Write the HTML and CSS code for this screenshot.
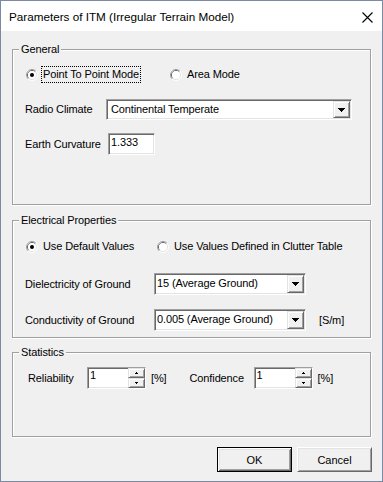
FILE: index.html
```html
<!DOCTYPE html>
<html>
<head>
<meta charset="utf-8">
<title>Parameters of ITM</title>
<link rel="stylesheet" href="styles.css">
</head>
<body>
<div class="window">
  <div class="titlebar">
    <span class="title">Parameters of ITM (Irregular Terrain Model)</span>
    <svg class="close" width="11" height="11" viewBox="0 0 11 11"><path d="M0.5 0.5L10.5 10.5M10.5 0.5L0.5 10.5" stroke="#000" stroke-width="1.1" fill="none"/></svg>
  </div>
  <div class="client">
    <fieldset class="group">
      <legend>General</legend>
      <div class="content c-general">
        <div class="row r-radio">
          <label class="radio w-p2p">
            <svg class="rb" width="12" height="12" viewBox="0 0 12 12"><path d="M2.11 9.89A5.5 5.5 0 0 1 9.89 2.11" stroke="#a0a0a0" fill="none"/><path d="M9.89 2.11A5.5 5.5 0 0 1 2.11 9.89" stroke="#fff" fill="none"/><path d="M2.82 9.18A4.5 4.5 0 0 1 9.18 2.82" stroke="#696969" fill="none"/><path d="M9.18 2.82A4.5 4.5 0 0 1 2.82 9.18" stroke="#e3e3e3" fill="none"/><circle cx="6" cy="6" r="4" fill="#fff"/><circle cx="6" cy="6" r="2" fill="#000"/></svg>
            <span class="rtext focus">Point To Point Mode</span>
          </label>
          <label class="radio">
            <svg class="rb" width="12" height="12" viewBox="0 0 12 12"><path d="M2.11 9.89A5.5 5.5 0 0 1 9.89 2.11" stroke="#a0a0a0" fill="none"/><path d="M9.89 2.11A5.5 5.5 0 0 1 2.11 9.89" stroke="#fff" fill="none"/><path d="M2.82 9.18A4.5 4.5 0 0 1 9.18 2.82" stroke="#696969" fill="none"/><path d="M9.18 2.82A4.5 4.5 0 0 1 2.82 9.18" stroke="#e3e3e3" fill="none"/><circle cx="6" cy="6" r="4" fill="#fff"/></svg>
            <span class="rtext">Area Mode</span>
          </label>
        </div>
        <div class="row r-climate">
          <span class="lbl w-climate">Radio Climate</span>
          <div class="combo combo-climate">
            <span class="ctext">Continental Temperate</span>
            <span class="dropbtn"><svg width="7" height="4" viewBox="0 0 7 4"><path d="M0 0h7v1h-1v1h-1v1h-1v1h-1v-1h-1v-1h-1v-1h-1z" fill="#000"/></svg></span>
          </div>
        </div>
        <div class="row r-earth">
          <span class="lbl w-earth">Earth Curvature</span>
          <div class="edit edit-earth">1.333</div>
        </div>
      </div>
    </fieldset>

    <fieldset class="group g-elec">
      <legend>Electrical Properties</legend>
      <div class="content c-elec">
        <div class="row r-radio">
          <label class="radio w-default">
            <svg class="rb" width="12" height="12" viewBox="0 0 12 12"><path d="M2.11 9.89A5.5 5.5 0 0 1 9.89 2.11" stroke="#a0a0a0" fill="none"/><path d="M9.89 2.11A5.5 5.5 0 0 1 2.11 9.89" stroke="#fff" fill="none"/><path d="M2.82 9.18A4.5 4.5 0 0 1 9.18 2.82" stroke="#696969" fill="none"/><path d="M9.18 2.82A4.5 4.5 0 0 1 2.82 9.18" stroke="#e3e3e3" fill="none"/><circle cx="6" cy="6" r="4" fill="#fff"/><circle cx="6" cy="6" r="2" fill="#000"/></svg>
            <span class="rtext">Use Default Values</span>
          </label>
          <label class="radio">
            <svg class="rb" width="12" height="12" viewBox="0 0 12 12"><path d="M2.11 9.89A5.5 5.5 0 0 1 9.89 2.11" stroke="#a0a0a0" fill="none"/><path d="M9.89 2.11A5.5 5.5 0 0 1 2.11 9.89" stroke="#fff" fill="none"/><path d="M2.82 9.18A4.5 4.5 0 0 1 9.18 2.82" stroke="#696969" fill="none"/><path d="M9.18 2.82A4.5 4.5 0 0 1 2.82 9.18" stroke="#e3e3e3" fill="none"/><circle cx="6" cy="6" r="4" fill="#fff"/></svg>
            <span class="rtext">Use Values Defined in Clutter Table</span>
          </label>
        </div>
        <div class="row r-diel">
          <span class="lbl w-ground">Dielectricity of Ground</span>
          <div class="combo combo-ground">
            <span class="ctext ctext-ground">15 (Average Ground)</span>
            <span class="dropbtn"><svg width="7" height="4" viewBox="0 0 7 4"><path d="M0 0h7v1h-1v1h-1v1h-1v1h-1v-1h-1v-1h-1v-1h-1z" fill="#000"/></svg></span>
          </div>
        </div>
        <div class="row r-cond">
          <span class="lbl w-ground">Conductivity of Ground</span>
          <div class="combo combo-ground">
            <span class="ctext ctext-ground">0.005 (Average Ground)</span>
            <span class="dropbtn"><svg width="7" height="4" viewBox="0 0 7 4"><path d="M0 0h7v1h-1v1h-1v1h-1v1h-1v-1h-1v-1h-1v-1h-1z" fill="#000"/></svg></span>
          </div>
          <span class="unit unit-sm">[S/m]</span>
        </div>
      </div>
    </fieldset>

    <fieldset class="group g-stats">
      <legend>Statistics</legend>
      <div class="content c-stats">
        <div class="row r-stats">
          <span class="lbl w-rel">Reliability</span>
          <div class="spin spin-rel">
            <span class="stext">1</span>
            <span class="spinbtns">
              <span class="sbtn"><svg width="3" height="2" viewBox="0 0 3 2"><path d="M1 0h1v1h1v1h-3v-1h1z" fill="#000"/></svg></span>
              <span class="sbtn"><svg width="3" height="2" viewBox="0 0 3 2"><path d="M0 0h3v1h-1v1h-1v-1h-1z" fill="#000"/></svg></span>
            </span>
          </div>
          <span class="unit unit-pct">[%]</span>
          <span class="lbl w-conf">Confidence</span>
          <div class="spin spin-conf">
            <span class="stext">1</span>
            <span class="spinbtns">
              <span class="sbtn"><svg width="3" height="2" viewBox="0 0 3 2"><path d="M1 0h1v1h1v1h-3v-1h1z" fill="#000"/></svg></span>
              <span class="sbtn"><svg width="3" height="2" viewBox="0 0 3 2"><path d="M0 0h3v1h-1v1h-1v-1h-1z" fill="#000"/></svg></span>
            </span>
          </div>
          <span class="unit unit-pct">[%]</span>
        </div>
      </div>
    </fieldset>

    <div class="footer">
      <button class="btn btn-default">OK</button>
      <button class="btn">Cancel</button>
    </div>
  </div>
</div>
</body>
</html>
```
FILE: styles.css
```css
html, body {
  margin: 0;
  padding: 0;
  background: #f0f0f0;
}

body {
  font-family: "Liberation Sans", Arial, sans-serif;
  color: #000;
}

.window {
  width: 383px;
  height: 482px;
  box-sizing: border-box;
  border: 1px solid #7b8aa0;
  background: #f0f0f0;
  display: flex;
  flex-direction: column;
}

.titlebar {
  flex: none;
  height: 30px;
  background: #fff;
  display: flex;
  align-items: center;
  justify-content: space-between;
  padding: 0 9px 0 8px;
}

.title {
  font-size: 11.7px;
  line-height: 16px;
  padding-top: 1px;
}

.close {
  display: block;
  margin-top: 2px;
}

.client {
  flex: 1;
  padding: 12px 11px 0 11px;
  display: flex;
  flex-direction: column;
  font-size: 11px;
  line-height: 13px;
  letter-spacing: -0.12px;
}

.group {
  margin: 0;
  padding: 0;
  min-width: 0;
  border: 1px solid #a0a0a0;
  box-shadow: 1px 1px 0 #fff, inset 1px 1px 0 #fff;
}

.group legend {
  margin-left: 6px;
  padding: 0 2px;
  font-size: 11px;
  line-height: 13px;
  background: #f0f0f0;
}

.g-elec {
  margin-top: 9px;
}

.g-stats {
  margin-top: 8px;
}

.content {
  box-sizing: border-box;
  display: flex;
  flex-direction: column;
}

.c-general {
  height: 148px;
  padding-top: 11px;
}

.c-elec {
  height: 110px;
  padding-top: 12px;
}

.c-stats {
  height: 77px;
  padding-top: 8px;
}

.row {
  display: flex;
  align-items: center;
  padding-left: 12px;
}

.r-radio {
  height: 15px;
  padding-left: 13px;
}

.r-climate {
  margin-top: 17px;
  height: 21px;
}

.r-earth {
  margin-top: 13px;
  height: 22px;
}

.r-diel {
  margin-top: 19px;
  height: 22px;
}

.r-cond {
  margin-top: 14px;
  height: 22px;
}

.r-stats {
  height: 22px;
  padding-left: 15px;
}

.radio {
  display: flex;
  align-items: center;
}

.rb {
  display: block;
  flex: none;
}

.rtext {
  margin-left: 4px;
  padding: 1px 1px;
}

.focus {
  outline: 1px dotted #000;
  outline-offset: 0;
}

.w-p2p {
  width: 144px;
}

.w-default {
  width: 131px;
}

.lbl {
  flex: none;
}

.w-climate {
  width: 81px;
}

.w-earth {
  width: 83px;
}

.w-ground {
  width: 129px;
}

.w-rel {
  width: 59px;
}

.w-conf {
  width: 64px;
  margin-left: 23px;
}

/* sunken field look */
.combo,
.edit,
.spin {
  box-sizing: border-box;
  border: 1px solid;
  border-color: #a0a0a0 #fff #fff #a0a0a0;
  box-shadow: inset 1px 1px 0 #696969, inset -1px -1px 0 #e3e3e3;
  background: #fff;
}

.combo {
  display: flex;
  align-items: stretch;
}

.combo-climate {
  width: 246px;
  height: 21px;
}

.combo-ground {
  width: 152px;
  height: 22px;
}

.ctext {
  flex: 1;
  padding-left: 4px;
  display: flex;
  align-items: center;
  white-space: nowrap;
  overflow: hidden;
}

.ctext-ground {
  padding-left: 2px;
  align-items: flex-start;
  padding-top: 3px;
}

.dropbtn {
  flex: none;
  width: 17px;
  margin: 1px 1px 1px 0;
  box-sizing: border-box;
  background: #f0f0f0;
  border: 1px solid;
  border-color: #e3e3e3 #696969 #696969 #e3e3e3;
  box-shadow: inset 1px 1px 0 #fff, inset -1px -1px 0 #a0a0a0;
  display: flex;
  align-items: center;
  justify-content: center;
}

.dropbtn svg {
  display: block;
}

.edit-earth {
  width: 47px;
  height: 22px;
  padding: 2px 0 0 2px;
}

.spin {
  display: flex;
  height: 22px;
}

.spin-rel {
  width: 59px;
}

.spin-conf {
  width: 59px;
}

.stext {
  flex: 1;
  padding: 1px 0 0 2px;
}

.spinbtns {
  flex: none;
  width: 17px;
  display: flex;
  flex-direction: column;
  margin: 0;
}

.sbtn {
  flex: 1;
  box-sizing: border-box;
  background: #f0f0f0;
  border: 1px solid;
  border-color: #e3e3e3 #696969 #696969 #e3e3e3;
  box-shadow: inset 1px 1px 0 #fff, inset -1px -1px 0 #a0a0a0;
  display: flex;
  align-items: center;
  justify-content: center;
}

.sbtn svg {
  display: block;
}

.unit-pct {
  margin-left: 5px;
}

.unit-sm {
  margin-left: 13px;
}

.footer {
  display: flex;
  justify-content: flex-end;
  gap: 5px;
  margin-top: 10px;
  margin-right: -1px;
}

.btn {
  width: 75px;
  height: 25px;
  box-sizing: border-box;
  margin: 0;
  padding: 0;
  font-family: "Liberation Sans", Arial, sans-serif;
  font-size: 11px;
  color: #000;
  background: #f0f0f0;
  border: 1px solid;
  border-color: #fff #696969 #696969 #fff;
  box-shadow: inset 1px 1px 0 #e3e3e3, inset -1px -1px 0 #a0a0a0;
}

.btn-default {
  border: 1px solid #000;
  box-shadow: inset 1px 1px 0 #fff, inset -1px -1px 0 #696969, inset 2px 2px 0 #e3e3e3, inset -2px -2px 0 #a0a0a0;
}
```
